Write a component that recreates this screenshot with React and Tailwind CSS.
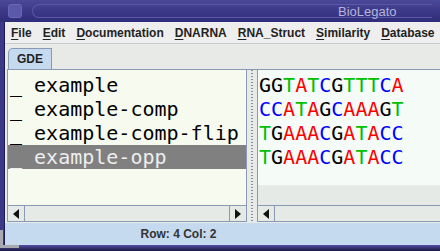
import { useState } from "react";

const names = ["example", "example-comp", "example-comp-flip", "example-opp"];

const seqs = ["GGTATCGTTTCA", "CCATAGCAAAGT", "TGAAACGATACC", "TGAAACGATACC"];

const baseColor = {
  A: "text-[#ff0000]",
  T: "text-[#00c000]",
  C: "text-[#0000ff]",
  G: "text-black",
};

const menus = [
  ["F", "ile"],
  ["E", "dit"],
  ["D", "ocumentation"],
  ["D", "NARNA"],
  ["R", "NA_Struct"],
  ["S", "imilarity"],
  ["D", "atabase"],
];

function Arrow({ dir }) {
  return (
    <div className="w-[17px] h-full flex items-center justify-center border-r border-[#8a9ab5] bg-[#e6eae6]">
      <svg width="6" height="10" viewBox="0 0 6 10">
        {dir === "left" ? (
          <polygon points="6,0 0,5 6,10" fill="#111" />
        ) : (
          <polygon points="0,0 6,5 0,10" fill="#111" />
        )}
      </svg>
    </div>
  );
}

export default function App() {
  const [selected] = useState(3);

  return (
    <div className="relative w-[440px] h-[251px] overflow-hidden bg-[#3c3a88] flex flex-col font-['DejaVu_Sans',sans-serif]">
      {/* title bar */}
      <div className="h-[22px] shrink-0 bg-gradient-to-b from-[#4a4898] to-[#2f2c78] flex items-center pl-[8px] pr-2">
        <div className="w-[14px] h-[14px] rounded-[3px] bg-[#5a58a8] border border-[#6a68b8]" />
        <div className="ml-[10px] flex-1 h-[14px] rounded-l-[7px] border border-[#5a58a8] border-r-0" />
        <span className="absolute left-[338px] top-[2px] text-[13px] text-[#b4b4dc] font-['Liberation_Sans',sans-serif]">
          BioLegato
        </span>
      </div>

      <div className="flex-1 flex ml-[4px] border-l border-[#1c1a50] bg-[#e8eae8] flex-col min-h-0">
        {/* menu bar */}
        <div className="h-[22px] shrink-0 bg-[#eeeeee] border-b border-[#c8cccc] flex items-center pl-[6px] gap-[11px] text-[12px] font-bold text-[#222] font-['Liberation_Sans',sans-serif]">
          {menus.map(([k, rest], i) => (
            <span key={i}>
              <span className="underline underline-offset-2">{k}</span>
              {rest}
            </span>
          ))}
        </div>

        {/* tab strip */}
        <div className="h-[25px] shrink-0 bg-[#e8eae8] flex items-end pl-[3px]">
          <div className="w-[44px] h-[21px] bg-[#c6daef] border border-b-0 border-[#8a9ab5] rounded-tl-[5px] flex items-center justify-center text-[12px] font-bold text-[#222] font-['Liberation_Sans',sans-serif]">
            GDE
          </div>
        </div>

        {/* content */}
        <div className="h-[153px] shrink-0 ml-[2px] border-t border-l border-[#8a9ab5] flex bg-[#e8eae8]">
          {/* left panel */}
          <div className="w-[239px] flex flex-col border-r border-[#8a9ab5]">
            <div className="flex-1 bg-[#f7faef] pt-[3px] font-['DejaVu_Sans_Mono',monospace] text-[20px] leading-[24px]">
              {names.map((n, i) => (
                <div
                  key={n}
                  className={
                    "pl-[2px] whitespace-pre " +
                    (i === selected ? "bg-[#808080] text-[#eeeeee]" : "text-black")
                  }
                >
                  {"_ " + n}
                </div>
              ))}
            </div>
            <div className="h-[17px] flex border-t border-[#8a9ab5] border-b bg-[#e6eae6]">
              <Arrow dir="left" />
              <div className="flex-1" />
              <div className="w-[17px] h-full flex items-center justify-center border-l border-[#8a9ab5]">
                <svg width="6" height="10" viewBox="0 0 6 10">
                  <polygon points="0,0 6,5 0,10" fill="#111" />
                </svg>
              </div>
            </div>
          </div>

          {/* divider */}
          <div className="w-[10px] bg-[#e8eae8] flex justify-center">
            <div className="w-[2px] h-full bg-[repeating-linear-gradient(to_bottom,#8a8f96_0px,#8a8f96_1px,transparent_1px,transparent_3px)]" />
          </div>

          {/* right panel */}
          <div className="flex-1 flex flex-col border-l border-[#8a9ab5]">
            <div className="flex-1 flex flex-col bg-[#e6eae6]">
              <div className="h-[115px] bg-[#f5fbf7] pt-[3px] pl-[1px] font-['DejaVu_Sans_Mono',monospace] text-[20px] leading-[24px]">
                {seqs.map((s, i) => (
                  <div key={i}>
                    {s.split("").map((c, j) => (
                      <span key={j} className={baseColor[c]}>
                        {c}
                      </span>
                    ))}
                  </div>
                ))}
              </div>
            </div>
            <div className="h-[17px] flex border-t border-b border-[#8a9ab5] bg-[#e6eae6]">
              <Arrow dir="left" />
              <div className="flex-1" />
            </div>
          </div>
        </div>

        {/* status bar */}
        <div className="flex-1 bg-[#c6daef] border-t border-[#e8eae8] flex items-center justify-center pr-[88px] text-[12px] font-bold text-[#333] font-['Liberation_Sans',sans-serif]">
          Row: 4 Col: 2
        </div>
      </div>
      <div className="h-[6px] shrink-0 bg-gradient-to-b from-[#5550a8] to-[#1a1840]" />
      {/* window corner */}
      <div className="absolute left-0 bottom-[3px] w-[19px] h-[18px] border-l-[3px] border-b-[3px] border-[#a8a8b0]" />
    </div>
  );
}
